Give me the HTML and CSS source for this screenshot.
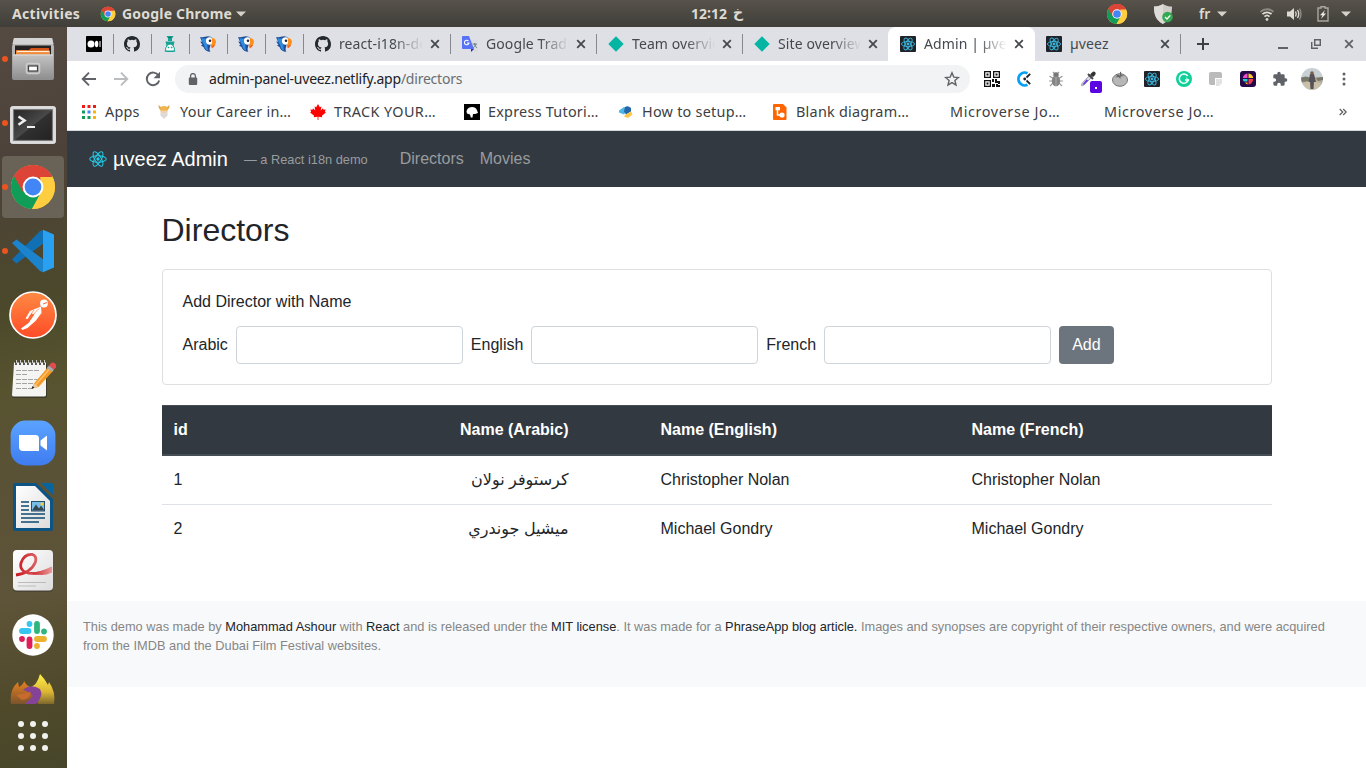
FILE: index.html
```html
<!DOCTYPE html>
<html lang="en">
<head>
<meta charset="utf-8">
<title>Admin | µveez</title>
<link rel="stylesheet" href="styles.css">
</head>
<body>
<svg class="defs" width="0" height="0" aria-hidden="true">
  <defs>
    <symbol id="chrome" viewBox="0 0 48 48">
      <circle cx="24" cy="24" r="22" fill="#ffcd40"/>
      <path d="M24 24 4.9 13A22 22 0 0 1 43.1 13z" fill="#db4437"/>
      <path d="M4.9 13A22 22 0 0 0 23 46l9-17-8-5z" fill="#0f9d58"/>
      <path d="M43.1 13A22 22 0 0 1 23 46l10-17-2-16z" fill="#ffcd40"/>
      <path d="M4.9 13 14 29l10-15h19.4A22 22 0 0 0 4.9 13z" fill="#db4437"/>
      <circle cx="24" cy="24" r="10.4" fill="#fff"/>
      <circle cx="24" cy="24" r="8.4" fill="#4285f4"/>
    </symbol>
    <symbol id="react" viewBox="0 0 24 24">
      <g fill="none" stroke="currentColor" stroke-width="1.35">
        <ellipse cx="12" cy="12" rx="11" ry="4.3"/>
        <ellipse cx="12" cy="12" rx="11" ry="4.3" transform="rotate(60 12 12)"/>
        <ellipse cx="12" cy="12" rx="11" ry="4.3" transform="rotate(120 12 12)"/>
      </g>
      <circle cx="12" cy="12" r="2.2" fill="currentColor"/>
    </symbol>
    <symbol id="react-tile" viewBox="0 0 16 16">
      <rect width="16" height="16" rx="1" fill="#20232a"/>
      <g fill="none" stroke="#3ab7dc" stroke-width=".9">
        <ellipse cx="8" cy="8" rx="6.6" ry="2.6"/>
        <ellipse cx="8" cy="8" rx="6.6" ry="2.6" transform="rotate(60 8 8)"/>
        <ellipse cx="8" cy="8" rx="6.6" ry="2.6" transform="rotate(120 8 8)"/>
      </g>
      <circle cx="8" cy="8" r="1.4" fill="#3ab7dc"/>
    </symbol>
    <symbol id="github" viewBox="0 0 16 16">
      <path fill="#24292f" d="M8 0C3.58 0 0 3.58 0 8c0 3.54 2.29 6.53 5.47 7.59.4.07.55-.17.55-.38v-1.49c-2.01.37-2.53-.49-2.69-.94-.09-.23-.48-.94-.82-1.13-.28-.15-.68-.52-.01-.53.63-.01 1.08.58 1.23.82.72 1.21 1.87.87 2.33.66.07-.52.28-.87.51-1.07-1.78-.2-3.64-.89-3.64-3.95 0-.87.31-1.59.82-2.15-.08-.2-.36-1.02.08-2.12 0 0 .67-.21 2.2.82a7.4 7.4 0 0 1 4 0c1.53-1.04 2.2-.82 2.2-.82.44 1.1.16 1.92.08 2.12.51.56.82 1.27.82 2.15 0 3.07-1.87 3.75-3.65 3.95.29.25.54.73.54 1.48v2.2c0 .21.15.46.55.38A8.01 8.01 0 0 0 16 8c0-4.42-3.58-8-8-8z"/>
    </symbol>
    <symbol id="toucan" viewBox="0 0 16 16">
      <path d="M0 1q3 .5 5-.3Q10-.5 12.500 2L10 11q-1 3 .5 4.800Q5 15.500 3.500 11L.8 9.500l1.700-.6L.2 5.500 2 5.700z" fill="#1e4f96"/>
      <path d="M1.500 2Q5 3 7 2q-2 3-.5 5.500Q8 9 7.500 11L8 14.500Q4.500 13 4.300 9.500 1.800 6 1.500 2z" fill="#2f8ce2"/>
      <circle cx="9.600" cy="5" r="3.700" fill="#fff"/>
      <circle cx="10" cy="4.800" r="1.300" fill="#182a47"/>
      <path d="M11.500 2Q15.800 2 16 6.200q-.5 3.600-4 6-1.500-1-1.200-3.200Q13 6.500 11.500 2z" fill="#ff8f1c"/>
      <path d="M12.500 9.500l2.500-.4q-1 2-3 3.200z" fill="#f0532d"/>
    </symbol>
    <symbol id="diamond" viewBox="0 0 16 16"><path d="M8 .3 15.700 8 8 15.700.3 8z" fill="#04b5a3"/></symbol>
    <symbol id="close" viewBox="0 0 10 10"><path d="M1.200 1.200l7.600 7.600M8.800 1.200 1.200 8.800" stroke="currentColor" stroke-width="1.800"/></symbol>
    <symbol id="caret" viewBox="0 0 10 6"><path d="M0 .5h10L5 5.500z" fill="#d5d2cb"/></symbol>
    <linearGradient id="steel" x2="0" y2="1"><stop stop-color="#c4c4c4"/><stop offset="1" stop-color="#8f8f8f"/></linearGradient>
    <linearGradient id="screen" x2="1" y2="1"><stop stop-color="#252525"/><stop offset=".5" stop-color="#484848"/><stop offset=".52" stop-color="#303030"/><stop offset="1" stop-color="#222"/></linearGradient>
    <linearGradient id="orange" x2="0" y2="1"><stop stop-color="#ff8a43"/><stop offset="1" stop-color="#ff4b27"/></linearGradient>
    <linearGradient id="zoomblue" x2="0" y2="1"><stop stop-color="#5ba3ff"/><stop offset="1" stop-color="#3f7cf0"/></linearGradient>
    <linearGradient id="paper" x2="1" y2="1"><stop stop-color="#fff"/><stop offset="1" stop-color="#dcdcdc"/></linearGradient>
    <linearGradient id="flame" x2="0" y2="1"><stop stop-color="#e8811f"/><stop offset="1" stop-color="#7a532c"/></linearGradient>
    <linearGradient id="flame2" x2="0" y2="1"><stop stop-color="#fff04a"/><stop offset=".6" stop-color="#dcb535"/><stop offset="1" stop-color="#7d682c"/></linearGradient>
    <linearGradient id="ribbon" x2="1" y2="0"><stop stop-color="#c9161d"/><stop offset="1" stop-color="#e99a9a"/></linearGradient>
  </defs>
</svg>

<header class="topbar">
  <span class="activities">Activities</span>
  <span class="app-menu"><svg width="16" height="16"><use href="#chrome"/></svg><span class="app-name">Google Chrome</span><svg width="10" height="6"><use href="#caret"/></svg></span>
  <span class="clock"><span>12</span><span class="colon">:</span><span>12</span><span class="day">خ</span></span>
  <span class="tray">
    <svg class="tray-chrome" width="22" height="22"><use href="#chrome"/></svg>
    <svg class="tray-shield" width="20" height="20" viewBox="0 0 20 20"><path d="M9 0c3 2 6 2.500 9 2.500C18 11 16 16 9 20 2 16 0 11 0 2.500 3 2.500 6 2 9 0z" fill="#cfcdc8"/><path d="M9 0v20C2 16 0 11 0 2.500 3 2.500 6 2 9 0z" fill="#dedcd8"/><circle cx="13.500" cy="13" r="5.300" fill="#34a853"/><path d="M11 13l2 2 3.300-3.600" fill="none" stroke="#fff" stroke-width="1.300"/></svg>
    <span class="lang">fr</span>
    <svg class="tray-caret" width="10" height="6"><use href="#caret"/></svg>
    <svg class="tray-wifi" width="16" height="14" viewBox="0 0 16 14" fill="none" stroke="#dedbd4" stroke-width="1.800"><path d="M1.500 4.800a9.500 9.500 0 0 1 13 0" stroke="#8d8a84"/><path d="M3.500 7.200a6.500 6.500 0 0 1 9 0"/><path d="M5.500 9.600a3.600 3.600 0 0 1 5 0"/><circle cx="8" cy="12.400" r="1" fill="#dedbd4" stroke-width="1"/></svg>
    <svg class="tray-sound" width="16" height="14" viewBox="0 0 16 14"><path d="M1 4.500h3L8 1v12L4 9.500H1z" fill="#dedbd4"/><g fill="none" stroke="#dedbd4" stroke-width="1.400"><path d="M9.500 4.500q1.500 2.500 0 5M11.500 3q2.500 4 0 8"/><path d="M13.500 1.500q3 5.500 0 11" stroke="#8d8a84"/></g></svg>
    <svg class="tray-battery" width="12" height="16" viewBox="0 0 12 16"><path d="M4 2V.7h4V2h3v13H1V2z" fill="none" stroke="#aaa79f" stroke-width="1.400"/><path d="M8 4 3 9.200h2.500L4 13l5-5.500H6.500z" fill="#efede8"/></svg>
    <svg width="10" height="6"><use href="#caret"/></svg>
  </span>
</header>

<div class="desktop">
  <aside class="dock">
    <div class="dock-item running">
      <svg width="44" height="46" viewBox="0 0 44 46"><path d="M3 2h38l2 9v31q0 2-2 2H3q-2 0-2-2V11z" fill="url(#steel)"/><path d="M3 2h38l1.500 6h-41z" fill="#d4d4d4"/><rect x="4" y="9.500" width="36" height="12" fill="#252221"/><path d="M5 14h13l2-2h18v11H5z" fill="#d35419"/><path d="M5 14.500h34V22H5z" fill="#f08a3c"/><path d="M6 15.500h32" stroke="#fff0d8" stroke-width="1.200"/><path d="M2 18.500h40V43H2z" fill="url(#steel)"/><path d="M2 19h40" stroke="#ddd"/><rect x="15.500" y="27.500" width="13" height="10" rx="2" fill="#a8a8a8" stroke="#cecece" stroke-width="1.500"/><rect x="17.500" y="30" width="9" height="5" fill="#fff" stroke="#444" stroke-width="1.200"/></svg>
    </div>
    <div class="dock-item running terminal">
      <svg width="46" height="38" viewBox="0 0 46 38"><rect x=".7" y=".7" width="44.600" height="36.600" rx="1.500" fill="#d9d9d9" stroke="#f3f3f3"/><rect x="3.600" y="3.600" width="38.800" height="30.800" fill="url(#screen)" stroke="#777"/><path d="M8.500 10.500 14.500 14.500 8.500 18.700" fill="none" stroke="#eee" stroke-width="2.600"/><path d="M17 21h8" stroke="#eee" stroke-width="2"/></svg>
    </div>
    <div class="dock-item running active"><svg width="48" height="48"><use href="#chrome"/></svg></div>
    <div class="dock-item running">
      <svg width="44" height="44" viewBox="0 0 44 44"><path d="M1 30.500 5.500 34.500 33 14V1L29 2z" fill="#1070b3"/><path d="M1 14 5.500 10.500 33 31v12.500L29 42z" fill="#1c84cc"/><path d="M32 .8 43 5.500v33L32 43.200z" fill="#29a1f0"/></svg>
    </div>
    <div class="dock-item">
      <svg width="48" height="48" viewBox="0 0 48 48"><circle cx="24" cy="24" r="23" fill="url(#orange)" stroke="#fff" stroke-width="1.700"/><circle cx="35" cy="12.500" r="3.900" fill="#fff"/><path d="M34 13l4-1.500" stroke="#ff6c37"/><path d="M32 15.500 21 20l-4.500 7.500 2 .5 4-5.500 3 1-6 8.500-7.500 5.500 1.500 1.500 5-2 8-7 6-8z" fill="#fff"/><path d="M30 17.500 19 29M25 19l-5 7M16 34l5-4" stroke="#ff6c37" stroke-width=".7"/></svg>
    </div>
    <div class="dock-item">
      <svg width="46" height="40" viewBox="0 0 46 40"><path d="M4 5h33v32q0 2-2 2H4q-2 0-2-2z" fill="#222" opacity=".5"/><path d="M4 3.500h32V36q0 1.500-2 1.500H4q-2 0-2-1.500z" fill="#f4f4f2"/><path d="M6 2v4M10 2v4M14 2v4M18 2v4M22 2v4M26 2v4M30 2v4M34 2v4" stroke="#333" stroke-width="1.600"/><path d="M6.500 1v3M10.500 1v3M14.500 1v3M18.500 1v3M22.500 1v3M26.500 1v3M30.500 1v3M34.500 1v3" stroke="#ccc"/><path d="M6 11.500h23M6 15.500h12M6 20.500h24M6 24.500h18M6 29.500h17" stroke="#a5a5a5" stroke-dasharray="5 1"/><path d="M22 29.500l2-5L38 8l5 4-14.500 16z" fill="#f49a24"/><path d="M25.500 26 40 9.500" stroke="#ffc169" stroke-width="1.500"/><path d="M22 29.500l2-5 4.500 3.500z" fill="#e9c99d"/><path d="M21.500 30l1-3 2 1.700z" fill="#222"/><path d="M37 9l2-2.500 5 4L42 13z" fill="#a9a9b0"/><path d="M39 6.500q3-5 6-2t-1 6z" fill="#e44b50"/></svg>
    </div>
    <div class="dock-item">
      <svg width="46" height="46" viewBox="0 0 46 46"><rect x=".6" y=".6" width="44.800" height="44.800" rx="15" fill="url(#zoomblue)"/><path d="M9 15h16.500q3.500 0 3.500 3.500V31H13q-4 0-4-4z" fill="#fff"/><path d="m30.500 20.500 6.500-5v15l-6.500-5z" fill="#fff"/></svg>
    </div>
    <div class="dock-item">
      <svg width="40" height="48" viewBox="0 0 40 48"><path d="M2 0h21l17 16v30q0 2-2 2H2q-2 0-2-2V2Q0 0 2 0z" fill="#0b5483"/><path d="M28 0h10q2 0 2 2v10z" fill="#06659f"/><path d="M3 3h19l15 15v27H3z" fill="url(#paper)"/><path d="M8 19h8M8 23h8M8 27h8M8 31h24M8 35h24M8 39h18" stroke="#0e4a70" stroke-width="1.600"/><rect x="18.500" y="18.500" width="13" height="9.500" fill="#78bce8" stroke="#24506d"/><path d="m19 27.500 4-6 3 4 2-3 3.500 5z" fill="#354650"/><circle cx="29" cy="21" r="1.600" fill="#f4cd35"/></svg>
    </div>
    <div class="dock-item">
      <svg width="42" height="44" viewBox="0 0 42 44"><rect x="1" y="2" width="40" height="41" rx="4" fill="#333" opacity=".5"/><rect x="1" y="1" width="40" height="40.500" rx="4" fill="url(#paper)"/><path d="M4 26Q19 24 23.500 13q1.500-6-3-7.500Q12 5 9 14q-1.500 5 3 8.500 12 5.500 28-3.500" fill="none" stroke="url(#ribbon)" stroke-width="2.800"/><path d="M18 23.500q10 0 22-6v6q-10 5-22 0z" fill="url(#ribbon)"/><path d="M6 33.500h28M6 37h18" stroke="#bbb" stroke-width="1.200"/></svg>
    </div>
    <div class="dock-item">
      <svg width="42" height="42" viewBox="0 0 42 42"><circle cx="21" cy="21" r="20.700" fill="#fff"/><g stroke-width="5.800" stroke-linecap="round"><path d="M10 17h6.500" stroke="#36c5f0"/><path d="M17.500 10v0" stroke="#36c5f0"/><path d="M25 10v7" stroke="#2eb67d"/><path d="M32 17.500v0" stroke="#2eb67d"/><path d="M25 25h7" stroke="#ecb22e"/><path d="M25 32v0" stroke="#ecb22e"/><path d="M17.500 25.500V32" stroke="#e01e5a"/><path d="M10 25v0" stroke="#e01e5a"/></g></svg>
    </div>
    <div class="dock-item clipped">
      <svg width="46" height="30" viewBox="0 0 46 30"><path d="M1 30Q-1 16 8 8l1 5q5-3 5-6 3 6 10 7v16z" fill="url(#flame)"/><path d="M21 13q6-2 9-13 5 5 8 11l1-3q7 10 5 22H28z" fill="url(#flame2)"/><path d="M13 16q8-7 17-1 4 7-4 15H15l8-8q-5-5-10-6z" fill="#854397"/><path d="m6 21 15-3q-1 7-9 8z" fill="#c76a2d"/></svg>
    </div>
    <div class="dock-apps"><i></i><i></i><i></i><i></i><i></i><i></i><i></i><i></i><i></i></div>
  </aside>

  <main class="window">
    <div class="tabs">
      <div class="pin"><svg width="16" height="16" viewBox="0 0 16 16"><rect width="16" height="16" rx=".8"/><circle cx="5" cy="8" r="3.500" fill="#fff"/><ellipse cx="10.600" cy="8" rx="1.700" ry="3.300" fill="#fff"/><path d="M14 5v6" stroke="#fff" stroke-width="1"/></svg></div>
      <div class="pin"><svg width="16" height="16"><use href="#github"/></svg></div>
      <div class="pin"><svg width="16" height="16" viewBox="0 0 16 16"><path d="M4.500 0h7L10 2.500V5H6V2.500zM3.500 5.500h9L11.500 10h-7z" fill="#16a394"/><path d="M6.500 1.500h3" stroke="#0e6e64"/><path d="M8 8q3 0 4.300 4 .7 2.500-.8 3.500h-7Q3 14.500 3.700 12 5 8 8 8z" fill="#fff" stroke="#16a394"/><path d="M2.800 15.200h10.400M5.700 11.500h1.600M8.800 11.500h1.600" stroke="#16a394" stroke-width="1.300"/></svg></div>
      <div class="pin"><svg width="16" height="16"><use href="#toucan"/></svg></div>
      <div class="pin"><svg width="16" height="16"><use href="#toucan"/></svg></div>
      <div class="pin"><svg width="16" height="16"><use href="#toucan"/></svg></div>
      <div class="tab first"><svg width="16" height="16"><use href="#github"/></svg><span class="tab-title fade">react-i18n-demo</span><svg width="10" height="10"><use href="#close"/></svg></div>
      <div class="tab"><svg width="16" height="16" viewBox="0 0 16 16"><path d="M6 4h9q1 0 1 1v11H9z" fill="#d9dce0"/><path d="M9 13h3l-3 3z" fill="#3b24a8"/><path d="M1 0h6l5 13H1q-1 0-1-1V1q0-1 1-1z" fill="#5872f5"/><path d="M6.500 5A2.300 2.300 0 1 0 7 7H5" fill="none" stroke="#fff" stroke-width="1.100"/><path d="M10.500 8h4.500M12.500 7v1q1 3 2.500 4M14 8q-1 3-3 4" fill="none" stroke="#6e7d88" stroke-width=".9"/></svg><span class="tab-title fade">Google Traduction</span><svg width="10" height="10"><use href="#close"/></svg></div>
      <div class="tab"><svg width="16" height="16"><use href="#diamond"/></svg><span class="tab-title fade">Team overview</span><svg width="10" height="10"><use href="#close"/></svg></div>
      <div class="tab before-active"><svg width="16" height="16"><use href="#diamond"/></svg><span class="tab-title fade">Site overview</span><svg width="10" height="10"><use href="#close"/></svg></div>
      <div class="tab current"><svg width="16" height="16"><use href="#react-tile"/></svg><span class="tab-title fade">Admin | µveez</span><svg width="10" height="10"><use href="#close"/></svg></div>
      <div class="tab after-active"><svg width="16" height="16"><use href="#react-tile"/></svg><span class="tab-title">µveez</span><svg width="10" height="10"><use href="#close"/></svg></div>
      <svg class="new-tab" width="12" height="12" viewBox="0 0 12 12"><path d="M6 0v12M0 6h12" stroke="#3c4043" stroke-width="2"/></svg>
      <div class="window-buttons">
        <svg width="10" height="12" viewBox="0 0 10 12"><path d="M0 10h10" stroke="#5f6368" stroke-width="2"/></svg>
        <svg width="10" height="10" viewBox="0 0 10 10"><path d="M3.700.7h5.600v5.600H3.700zM.7 3v6.300H7" fill="none" stroke="#5f6368" stroke-width="1.500"/></svg>
        <svg width="10" height="10"><use href="#close"/></svg>
      </div>
    </div>

    <div class="toolbar">
      <svg width="16" height="16" viewBox="0 0 16 16" fill="none" stroke="#5f6368" stroke-width="1.900"><path d="M15 8H2.500M8 1.700 1.700 8 8 14.300"/></svg>
      <svg width="16" height="16" viewBox="0 0 16 16" fill="none" stroke="#babcbe" stroke-width="1.900"><path d="M1 8h12.500M8 1.700 14.300 8 8 14.300"/></svg>
      <svg width="16" height="16" viewBox="0 0 16 16"><path d="M13.500 4.600A6.300 6.300 0 1 0 14.200 9.500" fill="none" stroke="#5f6368" stroke-width="1.900"/><path d="M15 .8v6.500H8.500z" fill="#5f6368"/></svg>
      <div class="omnibox">
        <svg width="10" height="13" viewBox="0 0 10 13"><rect x=".8" y="4.500" width="8.400" height="7.500" rx="1" fill="#5f6368"/><path d="M2.600 5V3a2.400 2.400 0 0 1 4.800 0v2" fill="none" stroke="#5f6368" stroke-width="1.300"/></svg>
        <span class="url"><b>admin-panel-uveez.netlify.app</b>/directors</span>
        <svg width="16" height="16" viewBox="0 0 16 16"><path d="m8 1.800 1.800 4.300 4.600.4-3.500 3 1.100 4.500L8 11.600 4 14l1.100-4.500-3.500-3 4.600-.4z" fill="none" stroke="#5f6368" stroke-width="1.400"/></svg>
      </div>
      <div class="extensions">
        <svg width="16" height="16" viewBox="0 0 16 16" fill="#111"><path d="M0 0h7v7H0zM9 0h7v7H9zM0 9h7v7H0z"/><path d="M1.300 1.300h4.400v4.400H1.300zM10.300 1.300h4.400v4.400h-4.400zM1.300 10.300h4.400v4.400H1.300z" fill="#fff"/><path d="M2.500 2.500h2v2h-2zM11.500 2.500h2v2h-2zM2.500 11.500h2v2h-2zM8 8h2v3H8zM11 8h2v2h3v3h-2v-1h-3zM8 13h3v3H8zM12 13h2v1h2v2h-4z"/></svg>
        <svg width="16" height="16" viewBox="0 0 16 16" fill="none"><path d="M11.500 2.200A6.400 6.400 0 1 0 11.500 13.800" stroke="#03a0f8" stroke-width="2.600"/><path d="m10.500 6.500 3.700-3.700M10.500 9.500l3.700 3.700" stroke="#20252a" stroke-width="1.800"/><circle cx="8.700" cy="8" r="1.400" fill="#20252a"/></svg>
        <svg width="16" height="16" viewBox="0 0 16 16"><path d="M1.500 5 5 7.500M14.500 5 11 7.500M1 10h14M2 15l3-3M14 15l-3-3M5 1l2 2M11 1 9 3" stroke="#999" stroke-width="1.100"/><circle cx="8" cy="4" r="2.700" fill="#777"/><ellipse cx="8" cy="10" rx="4.200" ry="5.300" fill="#858585"/><path d="M8 6v9" stroke="#aaa"/></svg>
        <span class="picker"><svg width="16" height="16" viewBox="0 0 16 16"><path d="m1.500 14.500.5-2 7-7.500 2 2-7 7z" fill="#dcd8f5" stroke="#888" stroke-width=".8"/><path d="m2.500 13.500 4-5 1.700 1-4 4z" fill="#6a35e8"/><path d="m8 3 5 5" stroke="#444" stroke-width="2"/><path d="M10 4q3-5 5-3t-2 5z" fill="#333"/></svg><i></i></span>
        <svg width="16" height="16" viewBox="0 0 16 16"><ellipse cx="8" cy="9" rx="7.500" ry="6.300" fill="#b7b7b7" stroke="#777"/><path d="m8 4.500-4-1.500 1 2-2 1.500 3.500-.5 2 2v-2.500l4-.5-3-1L9 .8 8 1z" fill="#666"/></svg>
        <svg width="16" height="16"><use href="#react-tile"/></svg>
        <svg width="16" height="16" viewBox="0 0 16 16"><circle cx="8" cy="8" r="8" fill="#11d09a"/><path d="M11.700 5A4.600 4.600 0 1 0 12.300 9H9" fill="none" stroke="#fff" stroke-width="1.500"/><path d="M10.300 7 12.500 9l-2 2" fill="none" stroke="#fff"/></svg>
        <svg width="16" height="16" viewBox="0 0 16 16"><path d="M3 1h9q2 0 2 2v4H7v7H3q-2 0-2-2V3q0-2 2-2z" fill="#bbb"/><path d="M8 8h6v4l-3 3H8z" fill="#e2e2e2"/></svg>
        <svg width="16" height="16" viewBox="0 0 16 16"><rect width="16" height="16" rx="3" fill="#260849"/><path d="M7.500 2.500V7H2.800Q3.300 3 7.500 2.500z" fill="#ec4bd0"/><path d="M8.500 2.500q4.200.5 4.700 4.500H8.500z" fill="#ffc928"/><path d="M2.800 8h4.700v2.500H3.800Q3 9.500 2.800 8z" fill="#27cfd7"/><path d="M5 11.500h2.500v2Q6 13 5 11.500z" fill="#ffc928"/><path d="M8.500 8h4.700q-.5 4.800-4.700 5.500z" fill="#ed3e50"/></svg>
        <svg width="16" height="16" viewBox="0 0 24 24"><path d="M20.500 11H19V7a2 2 0 0 0-2-2h-4V3.500a2.500 2.500 0 0 0-5 0V5H4a2 2 0 0 0-2 2v3.800h1.500a2.700 2.700 0 0 1 0 5.400H2V20a2 2 0 0 0 2 2h3.800v-1.500a2.700 2.700 0 0 1 5.400 0V22H17a2 2 0 0 0 2-2v-4h1.500a2.500 2.500 0 0 0 0-5z" fill="#5f6368"/></svg>
        <svg class="avatar" width="22" height="22" viewBox="0 0 22 22"><circle cx="11" cy="11" r="11" fill="#c8d0d4"/><path d="M.3 9h21.400q1 5-3 9-7 7-14 0Q-1 14 .3 9z" fill="#b5ae98"/><path d="M0 10q5-3 9 0l-1 3-7 1zM22 9l-7 1 2 3 5-1z" fill="#77776c"/><path d="M2 15q8-3 18 0-3 7-9 7t-9-7z" fill="#c9c0a6"/><path d="M9 6h4l2 8h-2l-.5 7h-3L9 14H7.500z" fill="#55525a"/><circle cx="11" cy="5" r="1.800" fill="#75604f"/></svg>
      </div>
      <svg class="kebab" width="4" height="14" viewBox="0 0 4 14" fill="#5f6368"><circle cx="2" cy="2" r="1.500"/><circle cx="2" cy="7" r="1.500"/><circle cx="2" cy="12" r="1.500"/></svg>
    </div>

    <nav class="bookmarks">
      <span class="apps"><svg width="14" height="14" viewBox="0 0 14 14"><path d="M0 0h3v3H0zM5.500 0h3v3h-3zM11 0h3v3h-3z" fill="#ea1c1c"/><path d="M0 5.500h3v3H0zM0 11h3v3H0zM5.500 11h3v3h-3z" fill="#109c58"/><path d="M5.500 5.500h3v3h-3z" fill="#4285f4"/><path d="M11 5.500h3v3h-3zM11 11h3v3h-3z" fill="#ffb300"/></svg><span>Apps</span></span>
      <span class="mark"><svg width="16" height="16" viewBox="0 0 16 16"><path d="M2.500 1q0 4 2 5h7q2-1 2-5l-2.500 2Q8 1.500 5 3z" fill="#e0a84c"/><path d="M4.500 3.500Q8 1 11.500 3.500v4h-7z" fill="#eeb64c"/><path d="M4.500 7h7v4.500L8 15l-3.500-3.500z" fill="#dedad5"/><path d="M5.500 6.500h5V9h-5z" fill="#f1cfaf"/></svg><span>Your Career in…</span></span>
      <span class="mark track"><svg width="16" height="16" viewBox="0 0 16 16"><path d="m8 0 1.800 3.200 1.600-.8-.7 4L13 4.300l.5 1.500 2.200-.3-.8 2.300 1 .7-4 3.300.3 1.500-3.800-.5V16h-.8v-3.200l-3.800.5.300-1.500-4-3.300 1-.7-.8-2.300 2.200.3.500-1.500 2.300 2.100-.7-4 1.600.8z" fill="#f00"/></svg><span>TRACK YOUR…</span></span>
      <span class="mark"><svg width="16" height="16" viewBox="0 0 16 16"><rect width="16" height="16"/><path d="M2.500 7.500Q3 4 6.500 3.200q5-.7 6.500 3L14 9l-3 1H9l-.5 3.500H6.800L6 10.500l-3-1z" fill="#fff"/></svg><span>Express Tutori…</span></span>
      <span class="mark"><svg width="16" height="16" viewBox="0 0 16 16"><path d="M1 6.500 6 3l4 2-4 5.500-5-2z" fill="#4bb7e8"/><path d="M7 3q3-2 6 1v3.500l-5 3-2-3z" fill="#2567a9"/><path d="M7 11l6-3.500 1.500 3L10 14l-4-1.500z" fill="#ffc548"/></svg><span>How to setup…</span></span>
      <span class="mark blank-diagram"><svg width="16" height="16" viewBox="0 0 16 16"><path d="M1 1q0-1 1-1h9l3.500 3.500V15q0 1-1 1H2q-1 0-1-1z" fill="#ff6500"/><path d="M5.500 5v6h4" fill="none" stroke="#fff" stroke-width="1.500"/><path d="M3.500 3H8v3.300H3.500z" fill="#fff"/><circle cx="10" cy="11" r="2.600" fill="#fff"/></svg><span>Blank diagram…</span></span>
      <span class="mark micro"><i class="blank"></i><span>Microverse Jo…</span></span>
      <span class="mark micro"><i class="blank"></i><span>Microverse Jo…</span></span>
      <svg class="more" width="8" height="8" viewBox="0 0 8 8"><path d="M.7 1l3 3-3 3M4.200 1l3 3-3 3" fill="none" stroke="#5f6368" stroke-width="1.300"/></svg>
    </nav>

    <div class="page">
      <nav class="navbar">
        <svg class="brand-icon" width="18" height="18"><use href="#react"/></svg>
        <span class="brand">µveez Admin</span>
        <span class="tagline">— a React i18n demo</span>
        <a class="nav-link">Directors</a>
        <a class="nav-link">Movies</a>
      </nav>
      <section class="container">
        <h2>Directors</h2>
        <form class="card">
          <div class="card-title">Add Director with Name</div>
          <div class="form-row">
            <label>Arabic</label><input type="text">
            <label>English</label><input type="text">
            <label>French</label><input type="text">
            <button type="button">Add</button>
          </div>
        </form>
        <table>
          <colgroup><col class="c-id"><col class="c-arabic"><col class="c-name"><col></colgroup>
          <thead><tr><th>id</th><th class="arabic">Name (Arabic)</th><th>Name (English)</th><th>Name (French)</th></tr></thead>
          <tbody>
            <tr><td>1</td><td class="arabic" lang="ar">كرستوفر نولان</td><td>Christopher Nolan</td><td>Christopher Nolan</td></tr>
            <tr><td>2</td><td class="arabic" lang="ar">ميشيل جوندري</td><td>Michael Gondry</td><td>Michael Gondry</td></tr>
          </tbody>
        </table>
      </section>
      <footer>This demo was made by <a>Mohammad Ashour</a> with <a>React</a> and is released under the <a>MIT license</a>. It was made for a <a>PhraseApp blog article.</a> Images and synopses are copyright of their respective owners, and were acquired from the IMDB and the Dubai Film Festival websites.</footer>
    </div>
  </main>
</div>
</body>
</html>
```
FILE: styles.css
```css
* { box-sizing: border-box; }
body { margin: 0; width: 1366px; height: 768px; overflow: hidden; display: flex; flex-direction: column; font-family: "Liberation Sans", Arial, "DejaVu Sans", sans-serif; background: #fff; }
svg { flex: none; display: block; }
.defs { position: absolute; }

/* Desktop top bar */
.topbar { height: 27px; flex: none; display: grid; grid-template-columns: 68px 147px 1fr auto; align-items: center; padding: 0 15px 0 12px; background: linear-gradient(#57534b, #403e39); color: #dedbd3; font: 700 14px/27px "Noto Sans", "Open Sans", sans-serif; white-space: nowrap; }
.activities { letter-spacing: .32px; }
.app-menu { display: flex; align-items: center; padding-left: 20px; }
.app-name { width: 112px; margin: 0 4px 0 6px; letter-spacing: .2px; }
.clock { display: flex; align-items: center; padding-left: 464px; }
.clock .colon { margin-top: -2px; }
.clock .day { padding-left: 6px; font-family: "DejaVu Sans", sans-serif; }
.tray { display: flex; align-items: center; }
.tray-shield { margin-left: 26px; }
.lang { margin-left: 25px; width: 12px; font-weight: 600; }
.tray-caret { margin-left: 6px; }
.tray-wifi { margin-left: 32px; }
.tray-sound { margin-left: 11px; }
.tray-battery { margin: 0 12px 0 15px; }

.desktop { flex: 1; min-height: 0; display: flex; }

/* Launcher */
.dock { width: 67px; flex: none; display: flex; flex-direction: column; align-items: center; background: linear-gradient(165deg, #554a42 0, #4c4239 18%, #4d4533 27%, #4b482b 37%, #57532f 48%, #5a5236 60%, #5e5439 76%, #4f492a 90%, #47462a 100%); padding: 1px 1px 0 0; }
.dock-item { width: 62px; height: 62px; margin: 0 0 2px; flex: none; display: flex; align-items: center; justify-content: center; position: relative; }
.dock-item.active { background: #686257; border-radius: 4px; }
.dock-item.terminal { padding-top: 3px; }
.running::before { content: ""; position: absolute; left: 0; top: 28px; width: 6px; height: 6px; border-radius: 50%; background: #e95420; }
.dock-item.clipped { height: 30px; margin: 6px 0 17px; overflow: hidden; }
.dock-apps { display: grid; grid-template-columns: repeat(3, 6px); gap: 6px; }
.dock-apps i { width: 6px; height: 6px; border-radius: 50%; background: #f1f1ee; }

.window { width: 1299px; background: #fff; display: flex; flex-direction: column; }

/* Tab strip */
.tabs { height: 34px; flex: none; display: flex; align-items: center; padding-left: 9px; background: #dee0e6; font: 14px/34px "Noto Sans", "Open Sans", sans-serif; color: #45494d; }
.pin, .tab { height: 34px; flex: none; display: flex; align-items: center; background: linear-gradient(#85888c, #85888c) right 0 top 7px / 1px 20px no-repeat; }
.pin { width: 38px; padding-left: 10px; }
.tab { width: 146px; padding-left: 11px; }
.tab.first { width: 147px; }
.tab-title { width: 83px; margin: 0 7px 0 8px; overflow: hidden; white-space: nowrap; letter-spacing: .1px; }
.first .tab-title { width: 84px; }
.fade { -webkit-mask-image: linear-gradient(90deg, #000 65%, transparent); mask-image: linear-gradient(90deg, #000 65%, transparent); }
.before-active { background: none; }
.tab.current { width: 147px; margin-left: -1px; padding-left: 12px; background: #fff; border-radius: 8px 8px 0 0; }
.new-tab { margin-left: 16px; }
.window-buttons { display: flex; align-items: center; gap: 23px; margin-left: 69px; color: #5f6368; }

/* Address bar */
.toolbar { height: 36px; flex: none; display: flex; align-items: center; gap: 16px; padding-left: 14px; }
.omnibox { width: 795px; height: 28px; margin-left: -2px; border-radius: 14px; background: #f1f3f4; display: flex; align-items: center; padding: 0 10px 0 13px; }
.url { flex: 1; margin-left: 11px; color: #6a6e72; font: 14px/28px "Noto Sans", "Open Sans", sans-serif; letter-spacing: -.22px; }
.url b { font-weight: 400; color: #202124; }
.extensions { display: flex; align-items: center; gap: 16px; margin-left: -2px; }
.picker { position: relative; }
.picker i { position: absolute; left: 10px; top: 10px; width: 12px; height: 12px; border-radius: 2px; background: radial-gradient(circle at 50% 60%, #fff 0 1px, #5a04e3 1.2px); }
.avatar { margin: 0 -3px; }
.kebab { margin-left: 6px; }

/* Bookmarks bar */
.bookmarks { height: 34px; flex: none; display: flex; align-items: center; padding: 0 0 4px 15px; border-bottom: 1px solid #d5dcdf; color: #3c4043; font: 14.4px/28px "Noto Sans", "Open Sans", sans-serif; white-space: nowrap; }
.apps { width: 74px; display: flex; align-items: center; gap: 9px; letter-spacing: .2px; }
.mark { width: 154px; display: flex; align-items: center; gap: 8px; letter-spacing: .25px; }
.mark.track { letter-spacing: .4px; }
.mark.micro { letter-spacing: .6px; }
.blank { width: 16px; }
.more { margin-left: 105px; }

/* Web page */
.page { flex: 1; color: #212529; font-size: 16px; line-height: 24px; }
.navbar { height: 56px; background: #333940; color: #999c9f; display: flex; align-items: center; padding-left: 22px; }
.brand-icon { color: #23cdea; }
.brand { margin-left: 6px; color: #fff; font-size: 20px; line-height: 30px; }
.tagline { margin: 1px 24px 0 16px; font-size: 12.8px; }
.nav-link { padding: 0 8px; }
.container { width: 1140px; height: 414px; margin: 0 auto; padding: 24px 15px 0; }
h2 { margin: 0 0 19.6px; font-size: 32px; font-weight: 500; line-height: 38.4px; }
.card { height: 116px; border: 1px solid #dfdfdf; border-radius: 4px; padding: 20px; margin: 0; }
.card-title { margin-bottom: 12px; }
.form-row { display: flex; align-items: center; gap: 8px; }
input { width: 227px; height: 38px; border: 1px solid #ced4da; border-radius: 4px; background: #fff; }
button { height: 38px; padding: 0 13px; border: 0; border-radius: 4px; background: #6c757d; color: #fff; font: 16px/24px "Liberation Sans", Arial, sans-serif; }
table { width: 100%; margin-top: 20px; table-layout: fixed; border-spacing: 0; }
.c-id { width: 176px; }
.c-arabic, .c-name { width: 311px; }
th { height: 51px; padding: 12px; text-align: left; color: #fff; background: #333940; border-top: 1px solid #454d55; border-bottom: 2px solid #454d55; }
td { height: 48px; padding: 12px; line-height: 24px; }
tr + tr td { height: 49px; border-top: 1px solid #dee2e6; }
.arabic { text-align: right; padding-right: 80px; }
td.arabic { direction: rtl; font-family: "Liberation Sans", "DejaVu Sans", sans-serif; }
footer { height: 86px; padding: 16px; background: #f8f9fa; color: #868686; font-size: 12.8px; line-height: 19.2px; }
footer a { color: #212529; }
```
